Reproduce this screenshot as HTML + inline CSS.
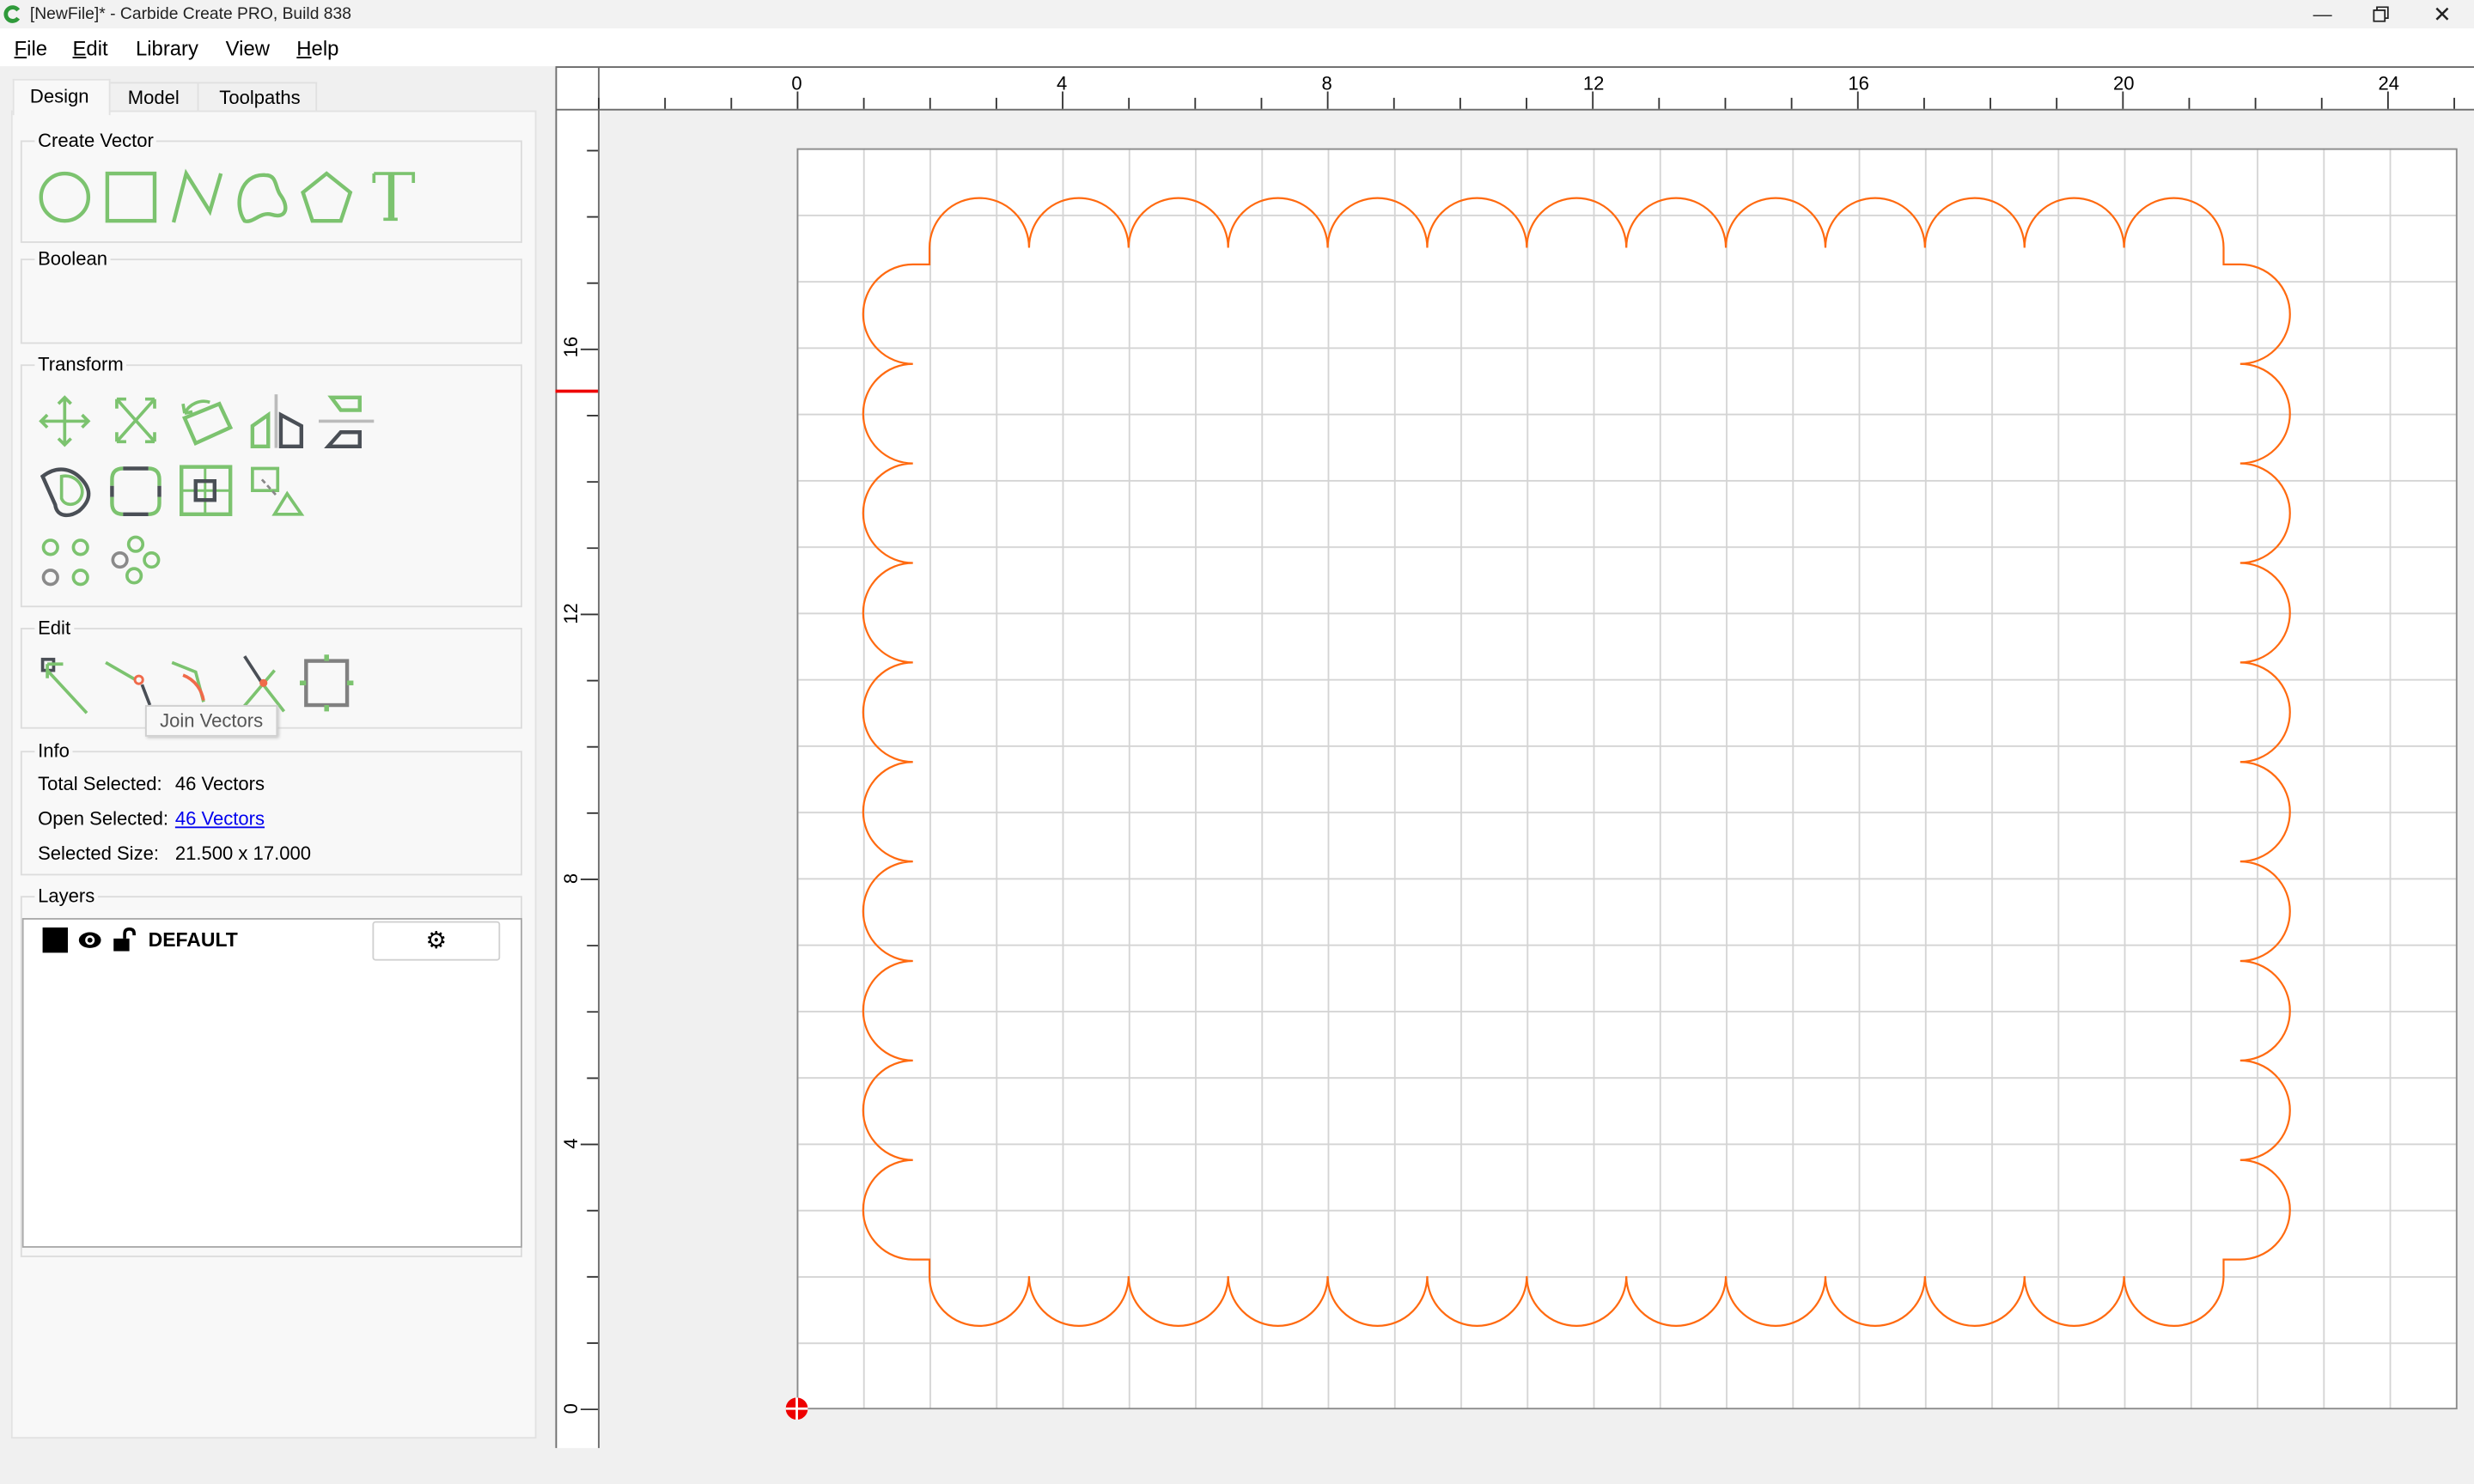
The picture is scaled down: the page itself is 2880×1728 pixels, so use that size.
<!DOCTYPE html>
<html><head><meta charset="utf-8">
<style>
html,body{margin:0;padding:0;width:2880px;height:1728px;overflow:hidden;background:#f0f0f0;}
#w{position:absolute;left:0;top:0;width:1568px;height:941px;transform:scale(1.836735);transform-origin:0 0;font-family:"Liberation Sans",sans-serif;color:#000;}
.a{position:absolute;}
.t{font-size:12px;white-space:nowrap;}
.gb{position:absolute;left:13px;width:316px;border:1px solid #dcdcdc;}
.gl{position:absolute;left:8px;top:-8px;background:#f8f8f8;padding:0 2px;font-size:12px;}
</style></head><body><div id="w">
<div class="a" style="left:0;top:0;width:1568px;height:18px;background:#f2f2f2"></div>
<svg class="a" style="left:2px;top:3px" width="12" height="12" viewBox="0 0 12 12"><path d="M9.5 3.5A4.3 4.3 0 1 0 9.5 8.5" fill="none" stroke="#2f9a3a" stroke-width="2.6"/></svg>
<div class="a" style="left:19px;top:3px;font-size:10.5px;color:#222">[NewFile]* - Carbide Create PRO, Build 838</div>
<div class="a" style="left:1466px;top:2px;font-size:12px;color:#333">—</div>
<svg class="a" style="left:1504px;top:4px" width="10" height="10"><rect x="0.5" y="2.5" width="7" height="7" fill="none" stroke="#222"/><path d="M2.5 2.5V0.5H9.5V7.5H7.5" fill="none" stroke="#222"/></svg>
<div class="a" style="left:1542px;top:1px;font-size:14px;color:#222">✕</div>
<div class="a" style="left:0;top:18px;width:1568px;height:24px;background:#fff"></div>
<div class="a" style="top:23px;font-size:13px;left:9px"><u>F</u>ile</div>
<div class="a" style="top:23px;font-size:13px;left:46px"><u>E</u>dit</div>
<div class="a" style="top:23px;font-size:13px;left:86px">Library</div>
<div class="a" style="top:23px;font-size:13px;left:143px">View</div>
<div class="a" style="top:23px;font-size:13px;left:188px"><u>H</u>elp</div>
<div class="a" style="left:68px;top:52px;width:57px;height:19px;background:#f0f0f0;border:1px solid #e0e0e0;border-bottom:none"></div>
<div class="a" style="left:125px;top:52px;width:74px;height:19px;background:#f0f0f0;border:1px solid #e0e0e0;border-bottom:none"></div>
<div class="a" style="left:7px;top:70px;width:331px;height:840px;background:#f8f8f8;border:1px solid #e2e2e2"></div>
<div class="a" style="left:8px;top:50px;width:60px;height:22px;background:#f8f8f8;border:1px solid #e2e2e2;border-bottom:none"></div>
<div class="a t" style="left:19px;top:54px">Design</div>
<div class="a t" style="left:81px;top:55px">Model</div>
<div class="a t" style="left:139px;top:55px">Toolpaths</div>
<div class="gb" style="top:89px;height:63px"><span class="gl">Create Vector</span></div>
<div class="gb" style="top:164px;height:52px"><span class="gl">Boolean</span></div>
<div class="gb" style="top:231px;height:152px"><span class="gl">Transform</span></div>
<div class="gb" style="top:398px;height:62px"><span class="gl">Edit</span></div>
<div class="gb" style="top:476px;height:77px"><span class="gl">Info</span></div>
<div class="gb" style="top:568px;height:227px"><span class="gl">Layers</span></div>
<svg class="a" style="left:0;top:0" width="340" height="480" fill="none" stroke-width="2.4">
<g stroke="#7cc36f">
<circle cx="41" cy="125" r="15"/>
<rect x="68" y="110" width="30" height="30"/>
<path d="M110 141L118 110L133 134L140 110"/>
<path d="M155 140C148 130 152 110 168 111C176 111 174 119 178 124C183 131 182 139 172 136C165 134 160 142 155 140Z"/>
<path d="M207 110L222 122L216 140H198L192 122Z"/>
<path d="M237 110H262V116M237 110V116M247 110V139M243 139H252M249 110V139" stroke-width="2"/>
<path d="M26 267H56M41 252V282M30 263L26 267L30 271M52 263L56 267L52 271M37 256L41 252L45 256M37 278L41 282L45 278" stroke-width="2"/>
<path d="M74 253H80M74 253V259M98 253H92M98 253V259M74 280H80M74 280V274M98 280H92M98 280V274M74 253L98 280M98 253L74 280" stroke-width="2"/>
<path d="M117 265L139 256L146 271L124 281Z"/>
<path d="M117 262C120 256 127 253 133 255M117 262L116 256M117 262L122 261" stroke-width="2"/>
<path d="M160 270L170 263V283H160Z"/>
<path d="M210 252H228V260H216Z"/>
<path d="M39 302C48 300 55 309 51 316C48 321 41 321 39 316Z" stroke-width="2"/>
<path d="M71 308V304Q71 297 78 297M94 297Q101 297 101 304V308M71 315V319Q71 326 78 326M94 326Q101 326 101 319V315"/>
<rect x="115" y="296" width="31" height="30"/><path d="M130 296V326M115 311H146" stroke-width="1.6"/>
<path d="M160 297H176V311H160Z M174 326L182 313L191 326Z" stroke-width="2"/>
<circle cx="32" cy="347" r="4.5" stroke-width="2"/><circle cx="51" cy="347" r="4.5" stroke-width="2"/><circle cx="51" cy="366" r="4.5" stroke-width="2"/>
<circle cx="86" cy="345" r="4.5" stroke-width="2"/><circle cx="96" cy="355" r="4.5" stroke-width="2"/><circle cx="85" cy="365" r="4.5" stroke-width="2"/>
</g>
<g stroke="#4a4f56">
<path d="M178 263L191 270V283H178Z"/>
<path d="M216 274H228V283H208Z"/>
<path d="M27 302C36 295 45 297 51 303C59 311 57 318 50 324C44 328 36 328 35 320Z"/>
<path d="M71 308V315M101 308V315M78 297H94M78 326H94"/>
<rect x="124" y="305" width="12" height="12"/>
</g>
<circle cx="32" cy="366" r="4.5" stroke="#8a8a8a" stroke-width="2"/>
<circle cx="76" cy="355" r="4.5" stroke="#8a8a8a" stroke-width="2"/>
<path d="M175 250V284" stroke="#bbb" stroke-width="2"/>
<path d="M202 267H237" stroke="#bbb" stroke-width="2"/>
<path d="M166 304L176 315" stroke="#888" stroke-width="1.5" stroke-dasharray="3 2"/>
<rect x="27" y="418" width="7" height="7" stroke="#4a4f56" stroke-width="2"/>
<path d="M30 425L55 452M30 421H40M30 421V430" stroke="#7cc36f" stroke-width="2"/>
<path d="M67 420L86 431" stroke="#7cc36f" stroke-width="2"/>
<path d="M90 434L95 447" stroke="#4a4f56" stroke-width="2"/>
<circle cx="88" cy="431" r="2.5" stroke="#f06a4a" stroke-width="1.6"/>
<path d="M109 420L124 426L129 445" stroke="#7cc36f" stroke-width="2"/>
<path d="M116 428C124 431 128 438 129 444" stroke="#f06a4a" stroke-width="2"/>
<path d="M155 416L166 433" stroke="#4a4f56" stroke-width="2"/>
<path d="M166 433L180 451M152 451L174 425" stroke="#7cc36f" stroke-width="2"/>
<circle cx="167" cy="433" r="2.5" fill="#f06a4a" stroke="none"/>
<rect x="194" y="419" width="26" height="28" stroke="#808080" stroke-width="2.4"/>
<path d="M207 415V419M207 447V451M190 433H194M220 433H224" stroke="#7cc36f" stroke-width="3"/>
</svg>
<div class="a" style="left:92px;top:447px;width:82px;height:18px;background:#f8f8f8;border:1px solid #cfcfcf;box-shadow:1px 1px 2px #bbb;font-size:12px;color:#555;line-height:18px;text-align:center">Join Vectors</div>
<div class="a t" style="left:24px;top:490px">Total Selected:</div><div class="a t" style="left:111px;top:490px">46 Vectors</div>
<div class="a t" style="left:24px;top:512px">Open Selected:</div><div class="a t" style="left:111px;top:512px;color:#00e;text-decoration:underline">46 Vectors</div>
<div class="a t" style="left:24px;top:534px">Selected Size:</div><div class="a t" style="left:111px;top:534px">21.500 x 17.000</div>
<div class="a" style="left:14px;top:582px;width:315px;height:207px;background:#fff;border:1px solid #a8a8a8"></div>
<div class="a" style="left:27px;top:588px;width:16px;height:16px;background:#000"></div>
<svg class="a" style="left:49px;top:588px" width="40" height="16"><ellipse cx="8" cy="8" rx="7" ry="5" fill="#000"/><circle cx="8" cy="8" r="3" fill="#fff"/><circle cx="8" cy="8" r="1.6" fill="#000"/><rect x="23" y="7" width="10" height="8" fill="#000"/><path d="M30 7V4Q30 1 33 1Q36 1 36 4V5" fill="none" stroke="#000" stroke-width="2"/></svg>
<div class="a" style="left:94px;top:589px;font-size:12.5px;font-weight:bold">DEFAULT</div>
<div class="a" style="left:236px;top:584px;width:79px;height:23px;background:#fff;border:1px solid #d0d0d0;border-radius:2px;text-align:center;font-size:15px;line-height:23px">⚙</div>
<svg class="a" style="left:0;top:0" width="1568" height="941" font-family="Liberation Sans" font-size="12">
<rect x="352" y="43" width="1216" height="26" fill="#fff"/>
<rect x="352" y="43" width="27" height="875" fill="#fff"/>
<path d="M352 42.5H1568M352.5 43V918M352 69.5H1568M379.5 43V918" stroke="#6a6a6a" stroke-width="1"/>
<rect x="352" y="247" width="27" height="2" fill="#e00"/>
<g stroke="#333" stroke-width="1">
<path d="M379.5 62V69M421.5 62V69M463.5 62V69M505.5 58V69M547.5 62V69M589.5 62V69M631.5 62V69M673.5 58V69M715.5 62V69M757.5 62V69M799.5 62V69M841.5 58V69M883.5 62V69M925.5 62V69M967.5 62V69M1009.5 58V69M1051.5 62V69M1093.5 62V69M1135.5 62V69M1177.5 58V69M1219.5 62V69M1261.5 62V69M1303.5 62V69M1345.5 58V69M1387.5 62V69M1429.5 62V69M1471.5 62V69M1513.5 58V69M1555.5 62V69"/>
<path d="M372 893.5H379M372 851.5H379M372 809.5H379M372 767.5H379M368 725.5H379M372 683.5H379M372 641.5H379M372 599.5H379M368 557.5H379M372 515.5H379M372 473.5H379M372 431.5H379M368 389.5H379M372 347.5H379M372 305.5H379M372 263.5H379M368 221.5H379M372 179.5H379M372 137.5H379M372 95.5H379M368 893.5H379"/>
</g>
<g text-anchor="middle">
<text x="505" y="57">0</text><text x="673" y="57">4</text><text x="841" y="57">8</text><text x="1010" y="57">12</text><text x="1178" y="57">16</text><text x="1346" y="57">20</text><text x="1514" y="57">24</text>
<text transform="translate(366 893) rotate(-90)">0</text>
<text transform="translate(366 725) rotate(-90)">4</text>
<text transform="translate(366 557) rotate(-90)">8</text>
<text transform="translate(366 389) rotate(-90)">12</text>
<text transform="translate(366 220) rotate(-90)">16</text>
</g>
<defs><pattern id="g" x="505" y="94" width="42.06" height="42.06" patternUnits="userSpaceOnUse"><path d="M0.5 0V42.06M0 0.5H42.06" stroke="#d4d4d4" stroke-width="1" fill="none"/></pattern></defs>
<rect x="505" y="94" width="1052" height="799" fill="#fff"/>
<rect x="505" y="94" width="1052" height="799" fill="url(#g)"/>
<rect x="505.5" y="94.5" width="1051.5" height="798.5" fill="none" stroke="#8a8a8a"/>
<g transform="translate(505 94) scale(42.06)">
<path vector-effect="non-scaling-stroke" fill="none" stroke="#ff6a10" stroke-width="1.2" d="M2 1.5a.75 .75 0 0 1 1.5 0a.75 .75 0 0 1 1.5 0a.75 .75 0 0 1 1.5 0a.75 .75 0 0 1 1.5 0a.75 .75 0 0 1 1.5 0a.75 .75 0 0 1 1.5 0a.75 .75 0 0 1 1.5 0a.75 .75 0 0 1 1.5 0a.75 .75 0 0 1 1.5 0a.75 .75 0 0 1 1.5 0a.75 .75 0 0 1 1.5 0a.75 .75 0 0 1 1.5 0a.75 .75 0 0 1 1.5 0L21.5 1.75L21.75 1.75a.75 .75 0 0 1 0 1.5a.75 .75 0 0 1 0 1.5a.75 .75 0 0 1 0 1.5a.75 .75 0 0 1 0 1.5a.75 .75 0 0 1 0 1.5a.75 .75 0 0 1 0 1.5a.75 .75 0 0 1 0 1.5a.75 .75 0 0 1 0 1.5a.75 .75 0 0 1 0 1.5a.75 .75 0 0 1 0 1.5L21.5 16.75L21.5 17a.75 .75 0 0 1 -1.5 0a.75 .75 0 0 1 -1.5 0a.75 .75 0 0 1 -1.5 0a.75 .75 0 0 1 -1.5 0a.75 .75 0 0 1 -1.5 0a.75 .75 0 0 1 -1.5 0a.75 .75 0 0 1 -1.5 0a.75 .75 0 0 1 -1.5 0a.75 .75 0 0 1 -1.5 0a.75 .75 0 0 1 -1.5 0a.75 .75 0 0 1 -1.5 0a.75 .75 0 0 1 -1.5 0a.75 .75 0 0 1 -1.5 0L2 16.75L1.75 16.75a.75 .75 0 0 1 0 -1.5a.75 .75 0 0 1 0 -1.5a.75 .75 0 0 1 0 -1.5a.75 .75 0 0 1 0 -1.5a.75 .75 0 0 1 0 -1.5a.75 .75 0 0 1 0 -1.5a.75 .75 0 0 1 0 -1.5a.75 .75 0 0 1 0 -1.5a.75 .75 0 0 1 0 -1.5a.75 .75 0 0 1 0 -1.5L2 1.75Z"/>
</g>
<circle cx="505" cy="893" r="7" fill="#e00"/>
<path d="M505 886V900M498 893H512" stroke="#fff" stroke-width="1.5"/>
</svg>
</div></body></html>
